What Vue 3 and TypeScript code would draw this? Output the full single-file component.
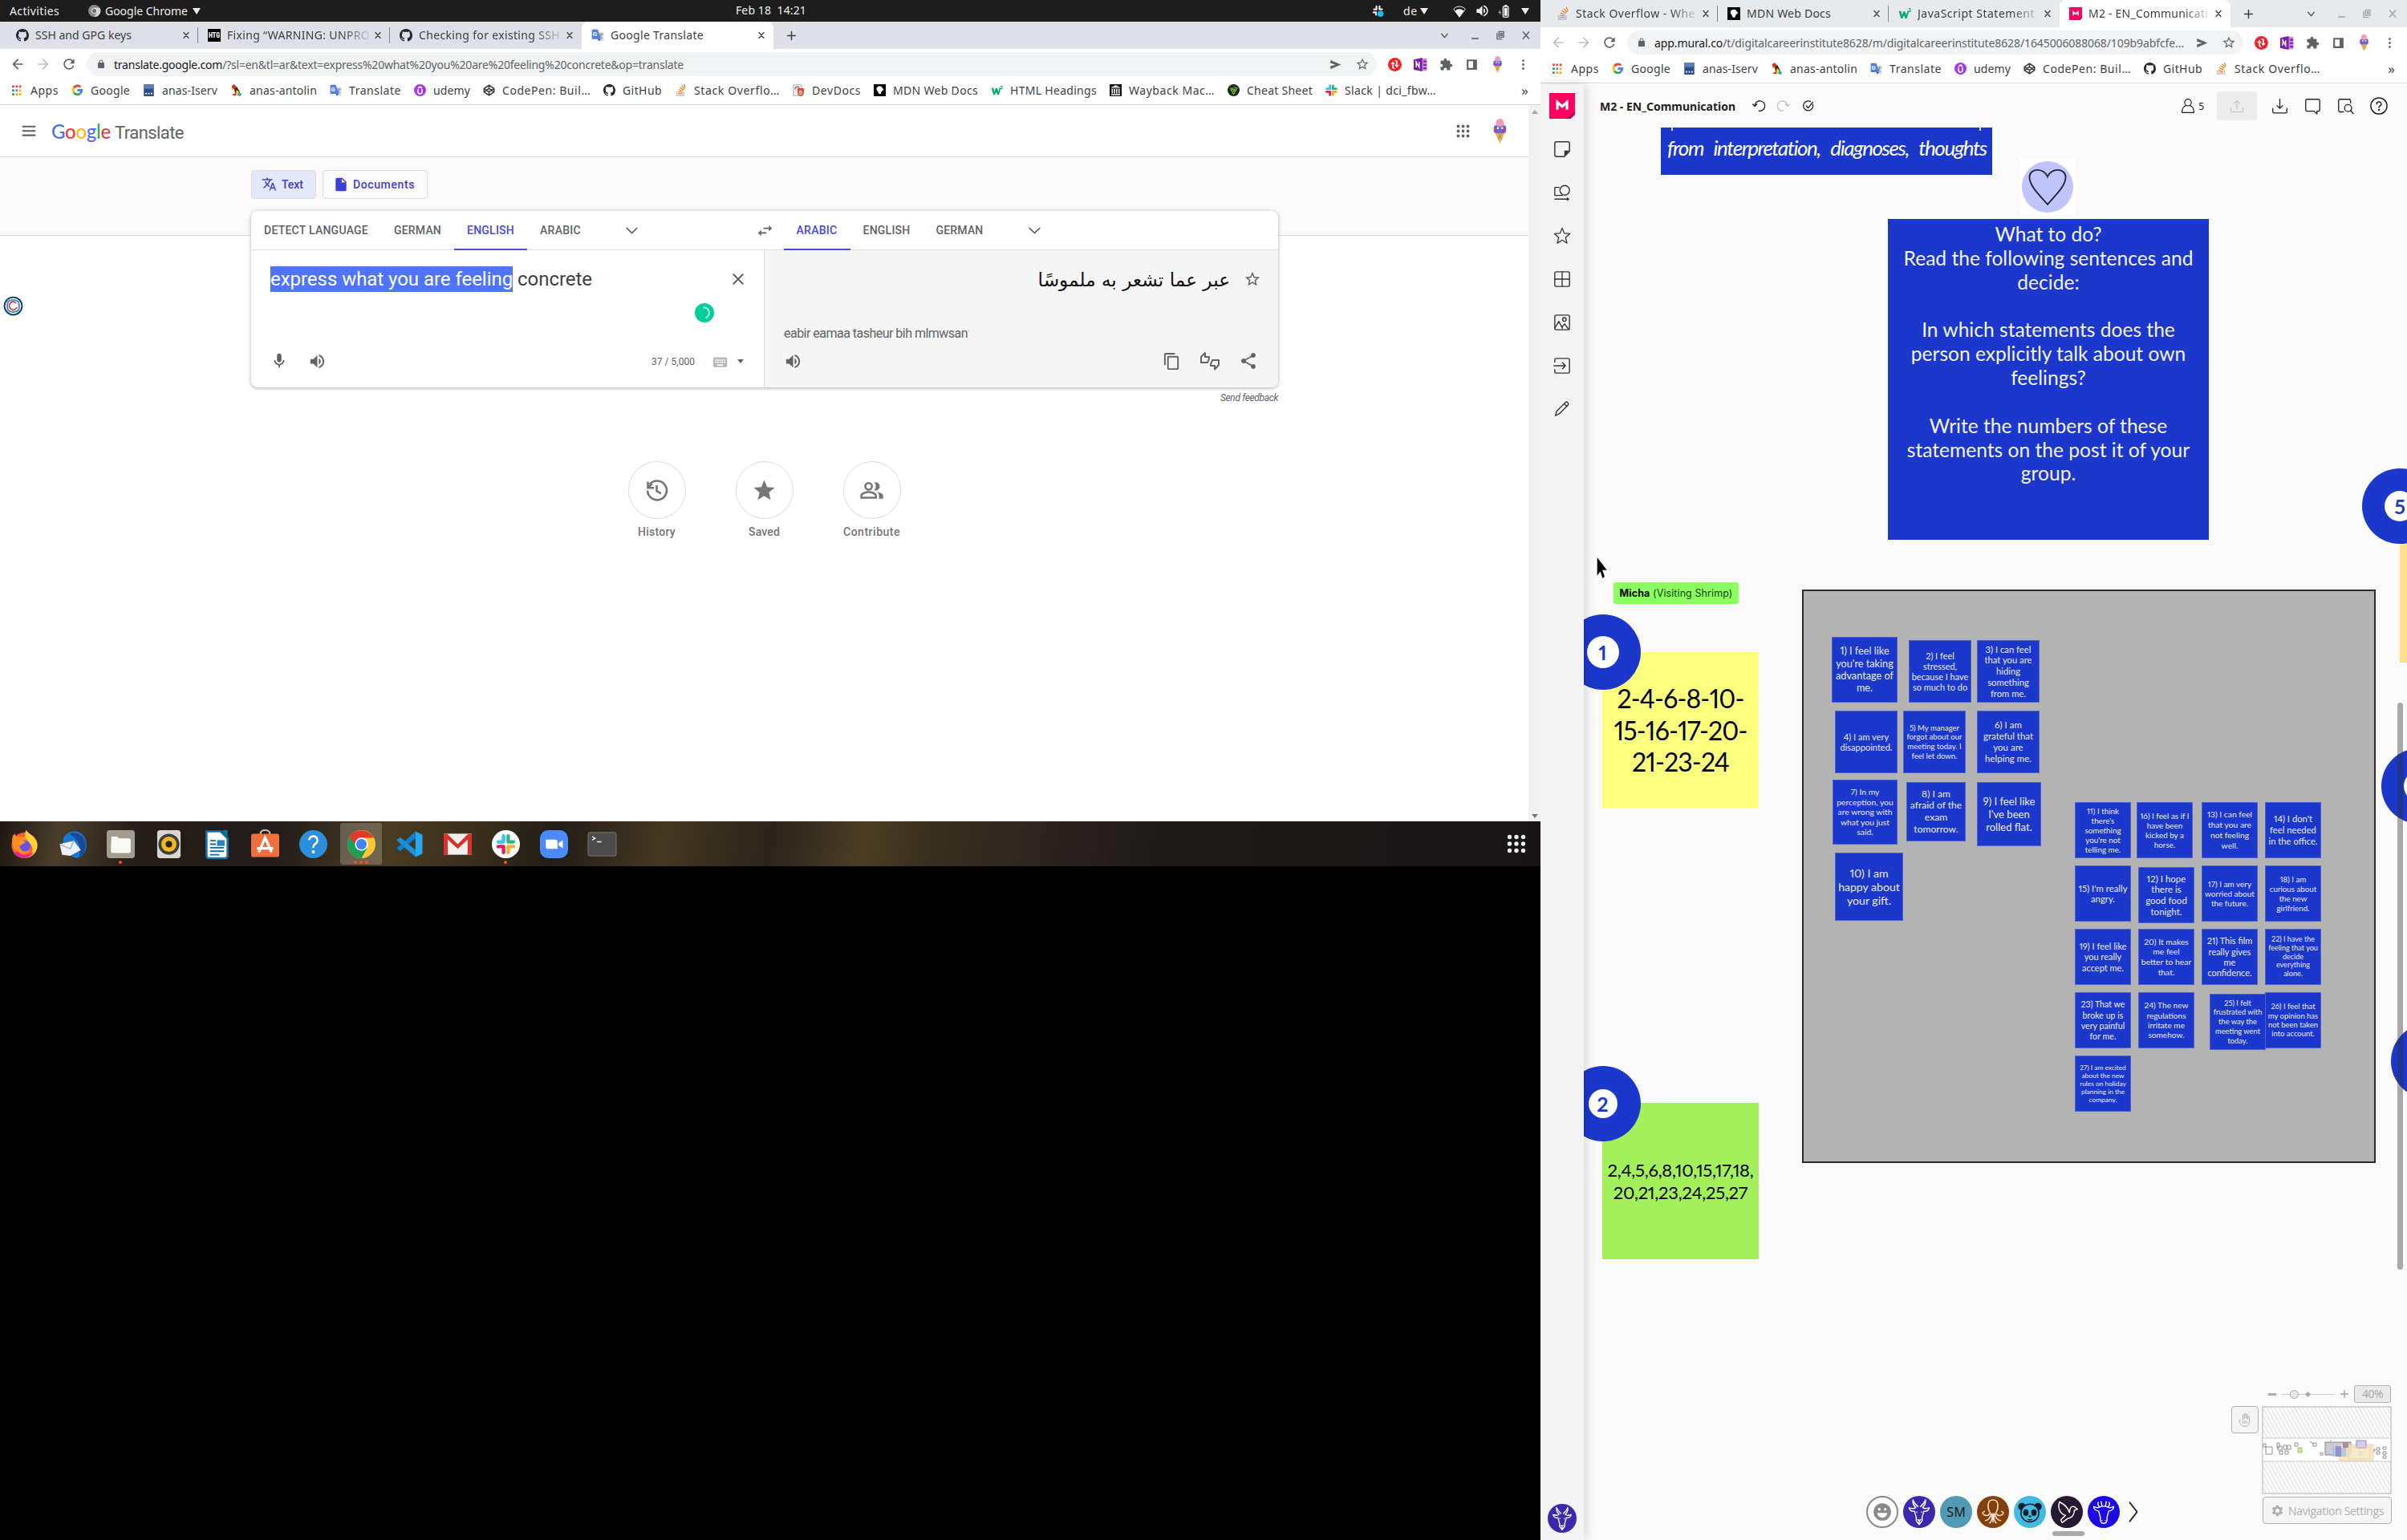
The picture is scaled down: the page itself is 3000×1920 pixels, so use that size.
<script setup lang="ts">
import { h, type FunctionalComponent, type ObjectDirective } from 'vue'

/*
 * Sets a run of text so that it takes up the given width:
 * by tracking, or by font size with the `size` modifier.
 */
const vFit: ObjectDirective<HTMLElement, number> = {
  mounted(el, { value, modifiers }) {
    if (modifiers.size) {
      const size = parseFloat(getComputedStyle(el).fontSize)
      const ratio = value / el.getBoundingClientRect().width
      el.style.fontSize = `${(size * ratio).toFixed(2)}px`
      return
    }
    el.style.letterSpacing = '0px'
    const base = el.getBoundingClientRect().width
    el.style.letterSpacing = '1px'
    const wide = el.getBoundingClientRect().width
    el.style.letterSpacing = `${((value - base) / (wide - base)).toFixed(3)}px`
  },
}

const p = (d: string) => `<path d="${d}" fill="currentColor"/>`
const s = (body: string, w = 1.4) =>
  `<g fill="none" stroke="currentColor" stroke-width="${w}" stroke-linecap="round" stroke-linejoin="round">${body}</g>`

const icons: Record<string, string> = {
  back: p('M20 11H7.83l5.59-5.59L12 4l-8 8 8 8 1.41-1.41L7.83 13H20v-2z'),
  forward: p('M4 11h12.17l-5.59-5.59L12 4l8 8-8 8-1.41-1.41L16.17 13H4v-2z'),
  reload: p('M17.65 6.35A7.958 7.958 0 0 0 12 4c-4.42 0-7.99 3.58-7.99 8s3.57 8 7.99 8c3.73 0 6.84-2.55 7.73-6h-2.08A5.99 5.99 0 0 1 12 18c-3.31 0-6-2.69-6-6s2.69-6 6-6c1.66 0 3.14.69 4.22 1.78L13 11h7V4l-2.35 2.35z'),
  lock: p('M18 8h-1V6c0-2.76-2.24-5-5-5S7 3.24 7 6v2H6c-1.1 0-2 .9-2 2v10c0 1.1.9 2 2 2h12c1.1 0 2-.9 2-2V10c0-1.1-.9-2-2-2zM9 6c0-1.66 1.34-3 3-3s3 1.34 3 3v2H9V6z'),
  send: p('M2 21L23 12 2 3v6l10 3-10 3z'),
  star: p('M22 9.24l-7.19-.62L12 2 9.19 8.63 2 9.24l5.46 4.73L5.82 21 12 17.27 18.18 21l-1.63-7.03L22 9.24zM12 15.4l-3.76 2.27 1-4.28-3.32-2.88 4.38-.38L12 6.1l1.71 4.04 4.38.38-3.32 2.88 1 4.28L12 15.4z'),
  starFull: p('M12 17.27L18.18 21l-1.64-7.03L22 9.24l-7.19-.61L12 2 9.19 8.63 2 9.24l5.46 4.73L5.82 21z'),
  close: p('M19 6.41L17.59 5 12 10.59 6.41 5 5 6.41 10.59 12 5 17.59 6.41 19 12 13.41 17.59 19 19 17.59 13.41 12z'),
  closeBold: s('<path d="M6 5l12 14M18 5L6 19"/>', 2.6),
  plus: s('<path d="M12 3v18M3 12h18"/>', 2.8),
  minus: '<path d="M4 17h16v3H4z" fill="currentColor"/>',
  chev: s('<path d="M5 8l7 8 7-8"/>', 2.8),
  chevThin: s('<path d="M4 8l8 8 8-8"/>', 2),
  restore: s('<path d="M9 4h10v12H9zM12.5 7.500h3v5h-3zM5 8v12h10"/>', 2.4),
  dots: '<g fill="currentColor"><circle cx="12" cy="5" r="2"/><circle cx="12" cy="12" r="2"/><circle cx="12" cy="19" r="2"/></g>',
  puzzle: p('M20.5 11H19V7c0-1.1-.9-2-2-2h-4V3.500a2.500 2.500 0 0 0-5 0V5H4c-1.100 0-1.990.9-1.990 2v3.800H3.500c1.490 0 2.700 1.210 2.700 2.700s-1.210 2.700-2.700 2.700H2V20c0 1.100.9 2 2 2h3.800v-1.500c0-1.490 1.210-2.700 2.700-2.700 1.490 0 2.700 1.210 2.700 2.700V22H17c1.100 0 2-.9 2-2v-4h1.500a2.500 2.500 0 0 0 0-5z'),
  panel: '<path d="M3 3h18v18H3z M6 6v12h8V6z" fill-rule="evenodd" fill="currentColor"/>',
  redo2: '<circle cx="12" cy="12" r="12" fill="#f5222d"/><g fill="none" stroke="#fff" stroke-width="2.600"><path d="M8.500 12v4.500c0 1.800 1.500 2.500 3 1.500M15.500 12V7.500c0-1.800-1.500-2.500-3-1.500"/></g><path d="M4.500 11.500h8l-4-5zM11.500 12.500h8l-4 5z" fill="#fff"/>',
  onenote: '<rect x="10" y="1" width="13" height="22" rx="1" fill="#c78be0"/><path d="M17 5h6v3h-6zM17 11h6v3h-6zM17 17h6v3h-6z" fill="#8e24aa"/><path d="M0 3l15-3v24L0 21z" fill="#7b1fa2"/><path d="M4.500 16.500v-9l5 9v-9" stroke="#fff" stroke-width="2" fill="none"/>',
  cone: '<path d="M6.500 12h11L12 24z" fill="#e5b25c"/><path d="M9 12l5 8M15 12l-5 8" stroke="#c98d35" stroke-width=".8"/><rect x="6" y="6" width="12" height="8" rx="3" fill="#5b6ad8"/><circle cx="12" cy="3.800" r="3.800" fill="#f79ac0"/><path d="M8 4h8v3H8z" fill="#f79ac0"/><circle cx="8" cy="11.500" r="1.500" fill="#f0238c"/><circle cx="16" cy="11.500" r="1.500" fill="#f0238c"/><circle cx="10" cy="9" r="1" fill="#fff"/><circle cx="14" cy="9" r="1" fill="#fff"/>',
  apps: '<g><path d="M2 1h5v5H2zM10 1h5v5h-5zM18 1h5v5h-5z" fill="#ea4335"/><path d="M2 10h5v5H2z" fill="#1e9e55"/><path d="M10 10h5v5h-5z" fill="#4285f4"/><path d="M18 10h5v5h-5zM18 19h5v5h-5zM10 19h5v5h-5z" fill="#fbaf05"/><path d="M2 19h5v5H2z" fill="#1e9e55"/></g>',
  google: '<g fill="none" stroke-width="4.500"><path d="M5 7a8.500 8.500 0 0 1 13-1.500" stroke="#ea4335"/><path d="M5 17a9 9 0 0 1 0-10" stroke="#fbbc05"/><path d="M17.500 18.500A8.600 8.600 0 0 1 5 17" stroke="#34a853"/><path d="M12 12h8.500a8.500 8.500 0 0 1-3 6.500" stroke="#4285f4"/></g>',
  iserv: '<path d="M2 0h20v24H2z" fill="#2c4f8c"/><path d="M2 0h20v9H2z" fill="#5d7fb5"/><path d="M5 17h3v3H5zM10.500 17h3v3h-3zM16 17h3v3h-3z" fill="#fff"/>',
  antolin: '<path d="M7 4l6 1 5 8 2 10-8-2-3-6z" fill="#222"/><path d="M3 3l5-3 4 5-3 5-5-1z" fill="#e53020"/><path d="M2 8l5 1-2 3z" fill="#f6a21a"/><path d="M12 11l5 3-1 8-5-1z" fill="#f4d313"/><path d="M17 15l6 5-3 4-5-2z" fill="#31a5dd"/><path d="M3 21l8-4v6z" fill="#d4291c"/>',
  translate: '<path d="M10 6h13v17H13z" fill="#dcdcdc"/><path d="M1 1h11l6 18H1z" fill="#4f7df0"/><path d="M12 19h6l-4 4z" fill="#4650c8"/><text x="2.500" y="14" font-family="Roboto" font-size="12" font-weight="700" fill="#fff">G</text><path d="M15 10h7M18.500 8.500v2c0 3-2 6-4 7M16 12c1 3 3 5 5 6" stroke="#7b8494" stroke-width="1.500" fill="none"/>',
  udemy: '<circle cx="12" cy="12" r="12" fill="#a435f0"/><path d="M8 10v5a4 4 0 0 0 8 0v-5M8 8l4-3 4 3" stroke="#fff" stroke-width="2.600" fill="none"/>',
  codepen: s('<path d="M12 2l10 6.500v7L12 22 2 15.500v-7zM12 2v6.500M12 15.500V22M2 8.500l10 7 10-7M2 15.500l10-7 10 7"/>', 2.500),
  github: '<path transform="scale(1.500)" fill="#24292e" d="M8 0C3.58 0 0 3.58 0 8c0 3.54 2.29 6.53 5.47 7.59.4.07.55-.17.55-.38 0-.19-.01-.82-.01-1.49-2.01.37-2.53-.49-2.69-.94-.09-.23-.48-.94-.82-1.13-.28-.15-.68-.52-.01-.53.63-.01 1.08.58 1.23.82.72 1.21 1.87.87 2.33.66.07-.52.28-.87.51-1.07-1.78-.2-3.64-.89-3.64-3.95 0-.87.31-1.59.82-2.15-.08-.2-.36-1.02.08-2.12 0 0 .67-.21 2.2.82.64-.18 1.32-.27 2-.27s1.36.09 2 .27c1.53-1.04 2.2-.82 2.2-.82.44 1.1.16 1.92.08 2.12.51.56.82 1.27.82 2.15 0 3.07-1.87 3.75-3.65 3.95.29.25.54.73.54 1.48 0 1.07-.01 1.93-.01 2.2 0 .21.15.46.55.38A8.01 8.01 0 0 0 16 8c0-4.42-3.58-8-8-8z"/>',
  stack: '<path d="M4 15v7.500h14V15" fill="none" stroke="#bcbbbb" stroke-width="2"/><path d="M6.500 19h9M6.500 15.200l9 1M7.500 11l8.500 2.500M10 6.500l7.500 4.500M14 2.500l5.500 7M18.500 0l2.500 8" stroke="#f48024" stroke-width="1.900"/>',
  devdocs: '<rect x="1" y="1" width="17" height="22" rx="2" fill="#e8e8e8" stroke="#999"/><path d="M5 10a4 4 0 1 1 5 3" stroke="#777" stroke-width="2" fill="none"/><path d="M9 8h14l-1.500 13.500L16 24l-5.500-2.500z" fill="#e44d26"/><text x="12.300" y="20" font-family="Roboto" font-size="11" font-weight="700" fill="#fff">5</text>',
  mdn: '<path d="M0 0h24v24H0z" fill="#000"/><path d="M6 7c3-4 9-4 11 0l3 4-4 3-2 5h-4l-2-5c-2-1-3-4-2-7z" fill="#fff"/>',
  w3: '<path d="M1 7h4l2 8 2.500-7h3l2.500 7 2-8h3l-4 14h-3l-2.500-6L8 21H5z" fill="#04aa6d"/><text x="18" y="9" font-family="Roboto" font-size="10" font-weight="700" fill="#04aa6d">3</text>',
  archive: '<path d="M0 0h24v24H0z" fill="#111"/><path d="M12 2l9 4H3zM3 7h18v1.500H3zM4 9.500h2.500v9H4zM8.500 9.500h2.500v9H8.500zM13 9.500h2.500v9H13zM17.500 9.500H20v9h-2.500zM3 19.500h18V22H3z" fill="#fff"/>',
  cheat: '<circle cx="12" cy="12" r="12" fill="#222"/><path d="M5 8h6M13 6l6 2-7 12-5-9 5-1v5l3-6" fill="none" stroke="#6fbf3a" stroke-width="2"/>',
  slack: '<g stroke-width="4.500" stroke-linecap="round"><path d="M9 2.500v7M2.500 9H9" stroke="#36c5f0"/><path d="M15 3v6.500M21.500 9H16" stroke="#2eb67d"/><path d="M15 15v6.500M15 15h6.500" stroke="#ecb22e"/><path d="M9 15v6.500M2.500 15H8" stroke="#e01e5a"/></g>',
  slackMono: '<g stroke-width="3.500" stroke="#e6e6e6" stroke-linecap="round"><path d="M9 3v6M4 9h5M15 3v6M20 9h-4M8 15v5M3 15h4"/></g><circle cx="17" cy="18" r="6" fill="#19c0ee"/>',
  htg: '<path d="M0 0h24v24H0z" fill="#000"/><text x="1.500" y="17" font-family="Roboto" font-size="13" font-weight="900" textLength="21" lengthAdjust="spacingAndGlyphs" fill="#fff">HTG</text>',
  mural: '<path d="M0 0h24v20l-4 4H0z" fill="#ff0061"/><path d="M24 17v3l-4 4h-5z" fill="#c4005a"/><path d="M7.500 15.500v-7l4.500 4.200 4.500-4.200v7" stroke="#fff" stroke-width="2.400" fill="none"/>',
  chromeGrey: '<circle cx="12" cy="12" r="12" fill="#8a8a8a"/><path d="M12 6h11a12 12 0 0 1-11 18l5-9z" fill="#d4d4d4"/><circle cx="12" cy="12" r="5.500" fill="#e8e8e8"/><circle cx="12" cy="12" r="4" fill="#666"/>',
  wifi: '<path d="M12 23L1 8C7 1.500 17 1.500 23 8z" fill="none" stroke="#eee" stroke-width="1.500"/><path d="M12 23L3.500 11.500a12 12 0 0 1 17 0z" fill="#eee"/>',
  vol: p('M3 9v6h4l5 5V4L7 9H3zm13.5 3c0-1.77-1.02-3.29-2.500-4.03v8.05c1.480-.73 2.500-2.250 2.500-4.020zM14 3.230v2.060c2.890.86 5 3.540 5 6.710s-2.110 5.850-5 6.710v2.060c4.010-.91 7-4.490 7-8.770s-2.990-7.860-7-8.770z'),
  battery: '<rect x="11" y="3" width="10" height="20" rx="2" fill="none" stroke="#eee" stroke-width="2"/><path d="M13 5.500h6v15h-6zM14 0h4v3h-4z" fill="#eee"/><path d="M6 8l-4 7h3l-1 5 4-7H5z" fill="#aaa"/>',
  menu: '<path d="M2 4.500h20v2.500H2zM2 11h20v2.500H2zM2 17.500h20V20H2z" fill="currentColor"/>',
  grid9: '<g fill="currentColor">' + [3.5, 12, 20.5].flatMap(x => [3.5, 12, 20.5].map(y => `<circle cx="${x}" cy="${y}" r="2.700"/>`)).join('') + '</g>',
  lang: p('M12.87 15.07l-2.54-2.51.03-.03A17.52 17.52 0 0 0 14.07 6H17V4h-7V2H8v2H1v1.99h11.17C11.5 7.92 10.44 9.75 9 11.35 8.07 10.32 7.3 9.19 6.69 8h-2c.73 1.63 1.73 3.17 2.98 4.56l-5.09 5.02L4 19l5-5 3.11 3.11.76-2.04zM18.5 10h-2L12 22h2l1.12-3h4.75L21 22h2l-4.5-12zm-2.62 7l1.62-4.33L19.12 17h-3.24z'),
  file: p('M6 2c-1.1 0-2 .9-2 2v16a2 2 0 0 0 2 2h12c1.1 0 2-.9 2-2V8l-6-6H6zm7 7V3.5L18.5 9H13z'),
  swap: p('M6.99 11L3 15l3.99 4v-3H14v-2H6.99v-3zM21 9l-3.99-4v3H10v2h7.01v3L21 9z'),
  mic: p('M12 14c1.66 0 3-1.34 3-3V5c0-1.66-1.34-3-3-3S9 3.34 9 5v6c0 1.66 1.34 3 3 3zm5-3c0 2.76-2.24 5-5 5s-5-2.24-5-5H5c0 3.53 2.61 6.43 6 6.92V21h2v-3.08c3.39-.49 6-3.39 6-6.92h-2z'),
  keyboard: p('M20 5H4c-1.1 0-1.99.9-1.99 2L2 17c0 1.1.9 2 2 2h16c1.1 0 2-.9 2-2V7c0-1.1-.9-2-2-2zm-9 3h2v2h-2V8zm0 3h2v2h-2v-2zM8 8h2v2H8V8zm0 3h2v2H8v-2zm-1 2H5v-2h2v2zm0-3H5V8h2v2zm9 7H8v-2h8v2zm0-4h-2v-2h2v2zm0-3h-2V8h2v2zm3 3h-2v-2h2v2zm0-3h-2V8h2v2z'),
  copy: p('M16 1H4c-1.1 0-2 .9-2 2v14h2V3h12V1zm3 4H8c-1.1 0-2 .9-2 2v14c0 1.1.9 2 2 2h11c1.1 0 2-.9 2-2V7c0-1.1-.9-2-2-2zm0 16H8V7h11v14z'),
  thumbs: s('<path d="M1 7v7h8l2-5V7H6V2L1 7zM23 17v-6h-8l-2 5v2h5v4.500z"/>', 2),
  share: p('M18 16.08c-.76 0-1.44.3-1.96.77L8.91 12.7c.05-.23.09-.46.09-.7s-.04-.47-.09-.7l7.05-4.11c.54.5 1.25.81 2.04.81 1.66 0 3-1.34 3-3s-1.34-3-3-3-3 1.34-3 3c0 .24.04.47.09.7L8.04 9.81C7.5 9.31 6.79 9 6 9c-1.66 0-3 1.34-3 3s1.34 3 3 3c.79 0 1.5-.31 2.04-.81l7.12 4.16c-.05.21-.08.43-.08.65 0 1.61 1.31 2.92 2.92 2.92s2.92-1.31 2.92-2.92-1.31-2.92-2.92-2.92z'),
  history: '<g fill="none" stroke="currentColor" stroke-width="2"><path d="M3.200 12a9.200 9.200 0 1 0 2-5.800M3.500 3.500v6h6M12 7v5.500l4.200 2.500"/><path d="M3.500 9.500l4-4"/></g>',
  people: '<g fill="none" stroke="currentColor" stroke-width="2"><circle cx="9" cy="8" r="3.200"/><path d="M2 19v-2c0-2 4-3.500 7-3.500s7 1.500 7 3.500v2z"/></g><path d="M14.500 4.200a4 4 0 1 1 0 7.600 5.500 5.500 0 0 0 0-7.600zM17.500 13.500c3 .5 5.500 1.700 5.500 3.500v3h-4v-3c0-1.400-.6-2.500-1.500-3.500z" fill="currentColor"/>',
  spinner: '<circle cx="12" cy="12" r="12" fill="#00cf9b"/><path d="M10.500 5.500a6.500 6.500 0 0 1 3 12.600" fill="none" stroke="#d6fff2" stroke-width="1.800"/>',
  crest: '<circle cx="12" cy="12" r="10.500" fill="#fff" stroke="#0b3a6b" stroke-width="1.800"/><rect x="5" y="5" width="14" height="14" rx="5" fill="none" stroke="#4285c8" stroke-width="1.800"/><path d="M15.500 8.500a4.800 4.800 0 1 0 1 5" fill="none" stroke="#c0392b" stroke-width="1.500"/>',
  undo: s('<path d="M5 12a7.500 7.500 0 1 1 6 7.400M2 9.500L5 12.500 8 9.500"/>', 1.600),
  redo: s('<path d="M19 12a7.500 7.500 0 1 0-6 7.400M22 9.500L19 12.500 16 9.500"/>', 1.600),
  checked: s('<path d="M20 9a9 9 0 1 1-4-5M8 12l3.500 4L20 5"/>', 2),
  person: s('<circle cx="12" cy="7" r="5"/><path d="M3 22c0-6 3-10 6-10.500M21 22c0-6-3-10-6-10.500M3 22h18"/>', 1.400),
  upload: s('<path d="M12 16V4M8 8l4-4 4 4M3 15v4.500c0 1 .5 1.500 1.500 1.500h15c1 0 1.500-.5 1.500-1.500V15"/>', 1.400),
  download: s('<path d="M12 2v13M8 11l4 4 4-4M2 15v5c0 1 .5 1.500 1.500 1.500h17c1 0 1.500-.5 1.500-1.500v-5"/>', 1.500),
  comment: s('<path d="M4 2h16c1 0 2 1 2 2v13c0 1-1 2-2 2h-2v4l-4-4H4c-1 0-2-1-2-2V4c0-1 1-2 2-2z"/>', 1.500),
  find: s('<path d="M9 20H4c-1 0-2-1-2-2V4c0-1 1-2 2-2h13c1 0 2 1 2 2v3"/><circle cx="15.500" cy="14.500" r="5"/><path d="M19 18l4 4.500"/>', 1.500),
  help: s('<circle cx="12" cy="12" r="11"/><path d="M9 9.500a3 3 0 1 1 4.300 2.700c-1 .5-1.300 1-1.300 2"/>', 1.600) + '<circle cx="12" cy="17.500" r="1.300" fill="currentColor"/>',
  sticky: s('<path d="M4 2h16c1 0 2 1 2 2v11l-7 7H4c-1 0-2-1-2-2V4c0-1 1-2 2-2z"/>', 1.600) + '<path d="M22 14h-7v8z" fill="currentColor"/>',
  shapes: s('<path d="M8 5H2v11h10"/><circle cx="15.500" cy="9" r="6.500"/><path d="M2 21h19M19 19.500l2 1.500-2 1.500"/>', 1.500),
  starThin: s('<path d="M12 1.500l3 7.200 7.500.5-5.800 5 1.900 7.800L12 17.800 5.400 22l1.900-7.800-5.800-5 7.500-.5z"/>', 1.400),
  frame: s('<rect x="2" y="2" width="20" height="20" rx="2"/><path d="M12 2v20M2 12h20"/>', 1.500),
  image: s('<rect x="2" y="2" width="20" height="20" rx="2"/><circle cx="15" cy="8" r="2.500"/><path d="M2.500 19l5-8.500 5 9.500M12 18l3.500-4 5 7"/>', 1.500),
  enter: s('<path d="M2 7V4c0-1 1-2 2-2h16c1 0 2 1 2 2v16c0 1-1 2-2 2H4c-1 0-2-1-2-2v-3M1 12h15M12.500 8l4 4-4 4"/>', 1.500),
  pencil: s('<path d="M3 21l1.500-6L17 2.500c1-1 4 1.500 3.500 3.500L8 18.500zM15 5l3.500 3.500"/>', 1.500),
  hand: s('<path d="M5 13c-2-1.500-3.500 0-2.500 2C4 19 6.500 23 12 23c5 0 7.500-3.500 7.500-8V8.500c0-1.700-2.700-1.700-2.700 0V4.500c0-1.700-2.700-1.700-2.700 0V3c0-1.700-2.700-1.700-2.700 0v1.500c0-1.700-2.700-1.700-2.700 0V13M11.400 4.500V10M14.100 4.500V10M16.800 8v3M9 15v3M12 14v4M15 15v3"/>', 1.300),
  gear: p('M19.14 12.94c.04-.3.06-.61.06-.94 0-.32-.02-.64-.07-.94l2.03-1.58c.18-.14.23-.41.12-.61l-1.92-3.32c-.12-.22-.37-.29-.59-.22l-2.39.96c-.5-.38-1.03-.7-1.62-.94l-.36-2.54c-.04-.24-.24-.41-.48-.41h-3.84c-.24 0-.43.17-.47.41l-.36 2.54c-.59.24-1.13.57-1.62.94l-2.39-.96c-.22-.08-.47 0-.59.22L2.74 8.87c-.12.21-.08.47.12.61l2.03 1.58c-.05.3-.09.63-.09.94s.02.64.07.94l-2.03 1.58c-.18.14-.23.41-.12.61l1.92 3.32c.12.22.37.29.59.22l2.39-.96c.5.38 1.03.7 1.62.94l.36 2.54c.05.24.24.41.48.41h3.84c.24 0 .44-.17.47-.41l.36-2.54c.59-.24 1.13-.56 1.62-.94l2.39.96c.22.08.47 0 .59-.22l1.92-3.32c.12-.22.07-.47-.12-.61l-2.01-1.58zM12 15.6A3.6 3.6 0 1 1 12 8.4a3.6 3.6 0 0 1 0 7.2z'),
  heart: '<path d="M12 23C7 17 1 11.500 1.200 6 1.500.5 10 .5 12 6c2-5.500 10.500-5.500 10.800 0C23 11.500 17 17 12 23z" fill="none" stroke="#23233a" stroke-width=".9"/>',
  cursor: '<path d="M1 0v21l5.500-5 4 8 3.500-2-4-7.500H18z" fill="#000"/>',
  smile: '<circle cx="12" cy="12" r="11.400" fill="#fff" stroke="#8a8a8a" stroke-width="1.200"/><circle cx="12" cy="12" r="6.500" fill="#8a8a8a"/><circle cx="9.800" cy="10" r="1" fill="#fff"/><circle cx="14.200" cy="10" r="1" fill="#fff"/><path d="M8.300 12.700h7.400a3.700 3.700 0 0 1-7.400 0z" fill="#fff"/>',
  goat: '<circle cx="12" cy="12" r="12" fill="#3f27ad"/><g fill="none" stroke="#fff" stroke-width=".85" stroke-linejoin="round"><path d="M9.700 8.700C8 7.500 7 5.500 7.300 3c.8 2.200 2.200 3.800 4 5.200M14.300 8.700c1.700-1.200 2.700-3.200 2.400-5.700-.8 2.200-2.200 3.800-4 5.200M9.700 8.700L7.500 9.500 4.500 9c.2 1.700 1.800 2.800 4 2.500L9.800 16v2.500L12 21.500l2.200-3V16l1.300-4.500c2.200.3 3.800-.8 4-2.500l-3 .5-2.200-.8M10.600 17.500l1.400 1 1.400-1M12 18.500v2"/><path d="M10.200 11.700v.8M13.800 11.700v.8"/></g>',
  initials: '<circle cx="12" cy="12" r="12" fill="#5199b5"/><text x="12" y="15.500" text-anchor="middle" font-family="Open Sans" font-size="9.500" textLength="14" fill="#111">SM</text>',
  octopus: '<circle cx="12" cy="12" r="12" fill="#84400b"/><g fill="none" stroke="#f3ddc8" stroke-width=".9"><path d="M9.500 12c-1.800-3-2-9 2.500-9s4.300 6 2.500 9M10 12c-1 4-5 3-6 .5M14 12c1 4 5 3 6 .5M10.500 13c0 4-3 5.500-4.500 5.500M13.500 13c0 4 3 5.500 4.500 5.500M11.300 13c0 4 0 6-2 7.500M12.700 13c0 4 0 6 2 7.500M4 12.500l2-1M20 12.500l-2-1M12 13v7"/></g>',
  panda: '<circle cx="12" cy="12" r="12" fill="#42bbe3"/><circle cx="6" cy="8" r="2.800" fill="#0d1c28"/><circle cx="18" cy="8" r="2.800" fill="#0d1c28"/><circle cx="12" cy="12.800" r="6.700" fill="#42bbe3" stroke="#0d1c28" stroke-width=".9"/><ellipse cx="9" cy="12.500" rx="2" ry="2.500" fill="#0d1c28"/><ellipse cx="15" cy="12.500" rx="2" ry="2.500" fill="#0d1c28"/><path d="M11 15h2l-1 1.200zM10 17.500c1 .8 3 .8 4 0" stroke="#0d1c28" stroke-width=".6" fill="#0d1c28"/>',
  bird: '<circle cx="12" cy="12" r="12" fill="#251a30"/><path d="M6.500 4.500c4 2 6.500 4.500 7.500 8 0-3.500 1.500-5 3.500-4.500l2.500 2-2.300.8c-.2 4.200-2.200 5.700-5.200 6.200l-4 3-1-2 3.500-3.500C7 13.500 5 9 6.500 4.500z" fill="none" stroke="#fff" stroke-width=".85" stroke-linejoin="round"/>',
  cow: '<circle cx="12" cy="12" r="12" fill="#1d09e6"/><g fill="none" stroke="#fff" stroke-width=".85" stroke-linejoin="round"><path d="M10.800 8L10 4M13.200 8l.8-4M9 8.300C7.700 7.500 7.500 6 8 4.500M15 8.300c1.300-.8 1.500-2.300 1-3.800M9 8.300c1.800-.7 4.200-.7 6 0l1.500.6 3-.9c-.2 2-1.800 3.300-3.700 3.300L14.500 16c.3 3-.5 4.500-2.500 4.500S9.200 19 9.500 16l-1.300-4.700C6.300 11.300 4.700 10 4.500 8l3 .9zM10.800 18.200v.6M13.200 18.200v.6"/></g>',
  next: s('<path d="M7 2l10 10L7 22"/>', 1.800),
  firefox: '<circle cx="12" cy="13" r="11" fill="#ff5a36"/><path d="M13.500 0c1 3 8 5 9.300 11a11 11 0 0 1-8 12.500c5-3 5-9 2-12-4-3-6-7-3.300-11.500z" fill="#ffd43b"/><path d="M1.500 8c0-3 1.500-4.500 2-5l2 3c5-2 9 1 10 4l-4 2-1 4 6 1c-2 5-9 5-12 1C2 15 1.500 12 1.500 8z" fill="#ff8a1f"/><path d="M3 20c4 5 13 5 17-1-5 3-11 3-14-1z" fill="#e3278c"/><circle cx="12.500" cy="13.500" r="4.600" fill="#6a4ff0"/><path d="M6 9c3-1 6 0 7 2-3 0-3 2-5 2z" fill="#ff9a1a"/>',
  thunderbird: '<path d="M4 10C3 3 12-1 18 2c7 4 8 14 2 20l-5 2-8-4c-4-2-5-7-3-10z" fill="#1c78cf"/><path d="M9 3c7-3 15 3 14 10 0 6-3 10-6 11 3-8 1-16-8-21z" fill="#164a9a"/><path d="M1 12l12-3 6 8-9 5-7-1z" fill="#eef1f6"/><path d="M1 12l9 4 3-7" fill="none" stroke="#a9b4c6" stroke-width="1"/>',
  files: '<rect x="0" y="0" width="24" height="24" rx="2.500" fill="#a29d8e"/><path d="M4 5.500h5l1.500 1.500H19a1.500 1.500 0 0 1 1.500 1.500V18A1.500 1.500 0 0 1 19 19.500H5A1.500 1.500 0 0 1 3.500 18z" fill="#f8f8f6"/>',
  rhythm: '<rect x="2" y="0" width="20" height="24" rx="2.500" fill="#dad6cd"/><circle cx="12" cy="12" r="9" fill="#3a3f44"/><circle cx="12" cy="12" r="6.500" fill="#f5b61c"/><circle cx="12" cy="12" r="2.800" fill="#222"/>',
  writer: '<path d="M3 1h12l6 6v15a2 2 0 0 1-2 2H5a2 2 0 0 1-2-2z" fill="#fff" stroke="#1471a8" stroke-width="1.800"/><path d="M16 0h5v6z" fill="#1471a8"/><path d="M6 9h5M6 12h5M6 15h12M6 18h12M6 21h8" stroke="#17689c" stroke-width="1.300"/><rect x="12" y="8.500" width="6.500" height="5" fill="#2b86bd"/>',
  software: '<path d="M8 5V3c0-4 8-4 8 0v2" fill="none" stroke="#d8c19b" stroke-width="1.500"/><rect x="0" y="3" width="24" height="20" rx="2" fill="#ee6f3e"/><path d="M6.500 19L12 6.500 17.500 19M5 15.500h14" fill="none" stroke="#fff" stroke-width="2.200"/>',
  ask: '<circle cx="12" cy="12" r="12" fill="#2b8fd9"/><path d="M8.500 8.500a3.500 3.500 0 1 1 5.500 3c-1.500 1-2 1.500-2 3.500" fill="none" stroke="#fff" stroke-width="1.700"/><circle cx="12" cy="18.500" r="1.300" fill="#fff"/>',
  chrome: '<circle cx="12" cy="12" r="12" fill="#fcc934"/><path d="M12 12L1.600 6A12 12 0 0 0 12 24l5-9z" fill="#1e9e55"/><path d="M1.600 6A12 12 0 0 1 22.400 6.500H12l-5.500 5z" fill="#e0392e"/><circle cx="12" cy="12" r="5.600" fill="#fff"/><circle cx="12" cy="12" r="4.500" fill="#4285f4"/>',
  vscode: '<path d="M17 1l6 3v16l-6 3z" fill="#29a8f2"/><path d="M17 1v6L4 18l-3-2.500z" fill="#0e7fc9"/><path d="M17 23v-6L4 6 1 8.500z" fill="#1a90dd"/>',
  gmail: '<rect x="0" y="3" width="24" height="18" fill="#f4f0ee"/><path d="M0 3h3l9 9 9-9h3v18h-3.500V8L12 16 3.500 8v13H0z" fill="#d9302c"/>',
  slackApp: '<circle cx="12" cy="12" r="12" fill="#fff"/><g stroke-width="3" stroke-linecap="round"><path d="M10 5v5M5.500 10H10" stroke="#36c5f0"/><path d="M14 5v5M18.500 10H14" stroke="#2eb67d"/><path d="M14 14v5M14 14h4.500" stroke="#ecb22e"/><path d="M10 14v5M5.500 14H10" stroke="#e01e5a"/></g>',
  zoom: '<rect width="24" height="24" rx="7" fill="#4a8cff"/><path d="M5 8h8a2 2 0 0 1 2 2v6H7a2 2 0 0 1-2-2zM16 11l3.500-2.500v7L16 13z" fill="#fff"/>',
  terminal: '<rect y="2" width="24" height="20" rx="2" fill="#4b4b4b" stroke="#6a6a6a" stroke-width=".8"/><path d="M3.500 5.500l2.500 1.500-2.500 1.500M7.500 10h4" fill="none" stroke="#eee" stroke-width="1"/>',
}

const Icon: FunctionalComponent<{ name: string; size?: number; stretch?: number }> = props =>
  h('svg', {
    viewBox: '0 0 24 24',
    width: props.size ?? 16,
    height: props.stretch ?? props.size ?? 16,
    preserveAspectRatio: 'none',
    style: { display: 'block', flex: 'none', overflow: 'visible' },
    innerHTML: icons[props.name],
  })
Icon.props = ['name', 'size', 'stretch']

interface Item { icon: string; text: string; w: number }
interface Win { key: string; tabs: Item[]; active: number; host: string; path: string; urlWidth: number; marks: Item[] }

const marks: Item[] = [
  { icon: 'apps', text: 'Apps', w: 35 },
  { icon: 'google', text: 'Google', w: 49 },
  { icon: 'iserv', text: 'anas-Iserv', w: 69 },
  { icon: 'antolin', text: 'anas-antolin', w: 84 },
  { icon: 'translate', text: 'Translate', w: 65 },
  { icon: 'udemy', text: 'udemy', w: 46 },
  { icon: 'codepen', text: 'CodePen: Buil…', w: 110 },
  { icon: 'github', text: 'GitHub', w: 49 },
  { icon: 'stack', text: 'Stack Overflo…', w: 107 },
]
const moreMarks: Item[] = [
  { icon: 'devdocs', text: 'DevDocs', w: 61 },
  { icon: 'mdn', text: 'MDN Web Docs', w: 106 },
  { icon: 'w3', text: 'HTML Headings', w: 108 },
  { icon: 'archive', text: 'Wayback Mac…', w: 107 },
  { icon: 'cheat', text: 'Cheat Sheet', w: 82 },
  { icon: 'slack', text: 'Slack | dci_fbw…', w: 114 },
]
const wins: Win[] = [
  {
    key: 'left', active: 3, host: 'translate.google.com', urlWidth: 710,
    path: '/?sl=en&tl=ar&text=express%20what%20you%20are%20feeling%20concrete&op=translate',
    tabs: [
      { icon: 'github', text: 'SSH and GPG keys', w: 120 },
      { icon: 'htg', text: 'Fixing “WARNING: UNPRO', w: 178 },
      { icon: 'github', text: 'Checking for existing SSH', w: 176 },
      { icon: 'translate', text: 'Google Translate', w: 116 },
    ],
    marks: [...marks, ...moreMarks],
  },
  {
    key: 'right', active: 3, host: 'app.mural.co', urlWidth: 660,
    path: '/t/digitalcareerinstitute8628/m/digitalcareerinstitute8628/1645006088068/109b9abfcfe…',
    tabs: [
      { icon: 'stack', text: 'Stack Overflow - Whe', w: 149 },
      { icon: 'mdn', text: 'MDN Web Docs', w: 105 },
      { icon: 'w3', text: 'JavaScript Statement', w: 146 },
      { icon: 'mural', text: 'M2 - EN_Communicati', w: 149 },
    ],
    marks,
  },
]
const extensions = ['redo2', 'onenote', 'puzzle', 'panel', 'cone', 'dots']
const dock = [
  { icon: 'firefox', dots: 0 }, { icon: 'thunderbird', dots: 0 }, { icon: 'files', dots: 1 },
  { icon: 'rhythm', dots: 0 }, { icon: 'writer', dots: 0 }, { icon: 'software', dots: 0 },
  { icon: 'ask', dots: 0 }, { icon: 'chrome', dots: 3 }, { icon: 'vscode', dots: 0 },
  { icon: 'gmail', dots: 0 }, { icon: 'slackApp', dots: 1 }, { icon: 'zoom', dots: 0 },
  { icon: 'terminal', dots: 0 },
]
const srcLangs = [
  { text: 'DETECT LANGUAGE', w: 130 }, { text: 'GERMAN', w: 59 },
  { text: 'ENGLISH', w: 59, on: true }, { text: 'ARABIC', w: 51 },
]
const dstLangs = [
  { text: 'ARABIC', w: 51, on: true }, { text: 'ENGLISH', w: 59 }, { text: 'GERMAN', w: 59 },
]
const shortcuts = [
  { icon: 'history', text: 'History', w: 47 },
  { icon: 'starFull', text: 'Saved', w: 39 },
  { icon: 'people', text: 'Contribute', w: 71 },
]
const tools = ['sticky', 'shapes', 'starThin', 'frame', 'image', 'enter', 'pencil']
const people = ['smile', 'goat', 'initials', 'octopus', 'panda', 'bird', 'cow']

/* Canvas items: x, y, size, line pitch, width of the longest line, text. */
type Note = [number, number, number, number, number, string]
const notes: Note[] = [
  [309, 635, 82, 15.3, 72, '1) I feel like\nyou\'re taking\nadvantage of\nme.'],
  [405, 639, 78, 13, 70.5, '2) I feel\nstressed,\nbecause I have\nso much to do'],
  [490, 639, 78, 13.8, 59, '3) I can feel\nthat you are\nhiding\nsomething\nfrom me.'],
  [313, 727, 78, 13, 65, '4) I am very\ndisappointed.'],
  [398, 727, 78, 11.7, 69, '5) My manager\nforgot about our\nmeeting today. I\nfeel let down.'],
  [490, 727, 78, 14, 62, '6) I am\ngrateful that\nyou are\nhelping me.'],
  [310, 813, 81, 12.5, 70.5, '7) In my\nperception, you\nare wrong with\nwhat you just\nsaid.'],
  [402, 816, 74, 14.7, 64.5, '8) I am\nafraid of the\nexam\ntomorrow.'],
  [490, 816, 80, 16, 65, '9) I feel like\nI\'ve been\nrolled flat.'],
  [313, 904, 85, 17, 76.7, '10) I am\nhappy about\nyour gift.'],
  [612, 841, 70, 12, 45, '11) I think\nthere\'s\nsomething\nyou\'re not\ntelling me.'],
  [689, 841, 70, 12, 61.3, '16) I feel as if I\nhave been\nkicked by a\nhorse.'],
  [770, 841, 70, 12.8, 56, '13) I can feel\nthat you are\nnot feeling\nwell.'],
  [849, 841, 70, 14, 61, '14) I don\'t\nfeel needed\nin the office.'],
  [612, 920, 70, 13, 61, '15) I\'m really\nangry.'],
  [691, 922, 70, 13.7, 51.7, '12) I hope\nthere is\ngood food\ntonight.'],
  [770, 920, 70, 12, 61.7, '17) I am very\nworried about\nthe future.'],
  [849, 920, 70, 12, 58.3, '18) I am\ncurious about\nthe new\ngirlfriend.'],
  [612, 999, 70, 13.5, 59, '19) I feel like\nyou really\naccept me.'],
  [691, 999, 70, 12.7, 62.3, '20) It makes\nme feel\nbetter to hear\nthat.'],
  [770, 999, 70, 13.3, 56.5, '21) This film\nreally gives\nme\nconfidence.'],
  [849, 999, 70, 10.8, 61.7, '22) I have the\nfeeling that you\ndecide\neverything\nalone.'],
  [612, 1078, 70, 13.3, 55, '23) That we\nbroke up is\nvery painful\nfor me.'],
  [691, 1078, 70, 12.3, 55, '24) The new\nregulations\nirritate me\nsomehow.'],
  [780, 1080, 70, 11.8, 60.7, '25) I felt\nfrustrated with\nthe way the\nmeeting went\ntoday.'],
  [849, 1078, 70, 11.3, 62.3, '26) I feel that\nmy opinion has\nnot been taken\ninto account.'],
  [612, 1157, 70, 10, 57.7, '27) I am excited\nabout the new\nrules on holiday\nplanning in the\ncompany.'],
]
const noteStyle = (n: Note) => ({
  left: `${n[0]}px`, top: `${n[1]}px`, width: `${n[2]}px`, height: `${n[2]}px`,
  lineHeight: `${n[3]}px`, fontSize: `${(n[3] * 0.79).toFixed(2)}px`,
})
const badges = [
  { x: 23.5, y: 653.5, r: 20, text: '1' },
  { x: 23.5, y: 1216.5, r: 18, text: '2' },
  { x: 1017, y: 472, r: 19, text: '5' },
  { x: 1041, y: 821, r: 19, text: '' },
  { x: 1053, y: 1164, r: 19, text: '' },
]
const sticky = [
  { cls: 'yellow', w: 166, text: '2-4-6-8-10-\n15-16-17-20-\n21-23-24' },
  { cls: 'green', w: 182, text: '2,4,5,6,8,10,15,17,18,\n20,21,23,24,25,27' },
]
const task = 'What to do?\nRead the following sentences and\ndecide:\n\nIn which statements does the\nperson explicitly talk about own\nfeelings?\n\nWrite the numbers of these\nstatements on the post it of your\ngroup.'
</script>

<template>
  <div class="desktop">
    <header class="topbar">
      <span v-fit="62" class="t activities">Activities</span>
      <Icon name="chromeGrey" :size="15" />
      <span v-fit="103" class="t appname">Google Chrome</span>
      <i class="tri" />
      <span v-fit="88" class="t clock">Feb 18&nbsp; 14:21</span>
      <Icon name="slackMono" :size="15" />
      <span v-fit="18" class="t lang">de</span>
      <i class="tri" />
      <Icon name="wifi" :size="16" class="wifi" />
      <Icon name="vol" :size="19" class="vol" />
      <Icon name="battery" :size="16" class="bat" />
      <i class="tri last" />
    </header>

    <section v-for="win in wins" :key="win.key" class="win" :class="win.key">
      <div class="tabs">
        <div v-for="(tab, i) in win.tabs" :key="tab.text" class="tab" :class="{ on: i === win.active, sep: i < 2 }">
          <Icon :name="tab.icon" :size="16" />
          <div class="title" :class="{ fade: tab.w > 140 }"><span v-fit="tab.w" class="t">{{ tab.text }}</span></div>
          <Icon name="closeBold" :size="12" class="x" />
        </div>
        <Icon name="plus" :size="13" class="add" />
        <span class="grow" />
        <div class="ctl"><Icon name="chev" :size="13" /></div>
        <div class="ctl wide dim"><Icon name="minus" :size="13" /></div>
        <div class="ctl dim"><Icon name="restore" :size="14" /></div>
        <div class="ctl dim"><Icon name="closeBold" :size="14" /></div>
      </div>
      <div class="toolbar">
        <div class="btn nav"><Icon name="back" :size="20" /></div>
        <div class="btn off"><Icon name="forward" :size="20" /></div>
        <div class="btn"><Icon name="reload" :size="20" /></div>
        <div class="pill">
          <Icon name="lock" :size="12" />
          <span v-fit="win.urlWidth" class="t url"><b>{{ win.host }}</b>{{ win.path }}</span>
          <span class="grow" />
          <Icon name="send" :size="15" />
          <Icon name="star" :size="18" class="fav" />
        </div>
        <div v-for="e in extensions" :key="e" class="btn"><Icon :name="e" :size="e === 'cone' ? 21 : 17" /></div>
      </div>
      <div class="marks">
        <div v-for="m in win.marks" :key="m.text" class="mark">
          <Icon :name="m.icon" :size="m.icon === 'apps' ? 13 : 15" />
          <span v-fit="m.w" class="t">{{ m.text }}</span>
        </div>
        <span class="grow" />
        <span class="t more">»</span>
      </div>

      <main v-if="win.key === 'left'" class="page">
        <div class="content">
          <header class="ghead">
            <Icon name="menu" :size="20" />
            <div class="logo">
              <span v-fit="74" class="t g"><i class="b">G</i><i class="r">o</i><i class="y">o</i><i class="b">g</i><i class="gr">l</i><i class="r">e</i></span>
              <span v-fit="86" class="t tr">Translate</span>
            </div>
            <span class="grow" />
            <Icon name="grid9" :size="17" />
            <Icon name="cone" :size="31" class="me" />
          </header>
          <div class="band">
            <button class="mode on"><Icon name="lang" :size="19" /><span v-fit="27" class="t">Text</span></button>
            <button class="mode doc"><Icon name="file" :size="20" /><span v-fit="77" class="t">Documents</span></button>
          </div>
          <div class="card">
            <div class="langs">
              <div class="half src">
                <div v-for="l in srcLangs" :key="l.text" class="lang-tab" :class="{ on: l.on }"><span v-fit="l.w" class="t">{{ l.text }}</span></div>
                <Icon name="chevThin" :size="19" class="drop" />
              </div>
              <Icon name="swap" :size="23" class="swap" />
              <div class="half dst">
                <div v-for="l in dstLangs" :key="l.text" class="lang-tab" :class="{ on: l.on }"><span v-fit="l.w" class="t">{{ l.text }}</span></div>
                <Icon name="chevThin" :size="19" class="drop" />
              </div>
            </div>
            <div class="panes">
              <div class="pane input">
                <div class="row">
                  <span v-fit="401" class="t big"><mark>express what you are feeling</mark> concrete</span>
                  <span class="grow" />
                  <Icon name="close" :size="24" />
                </div>
                <div class="row spin"><Icon name="spinner" :size="24" /></div>
                <div class="row foot">
                  <Icon name="mic" :size="22" /><Icon name="vol" :size="23" class="spk" />
                  <span class="grow" />
                  <span v-fit="54" class="t count">37 / 5,000</span>
                  <Icon name="keyboard" :size="21" class="kb" />
                  <i class="tri" />
                </div>
              </div>
              <div class="pane output">
                <div class="row">
                  <span class="grow" />
                  <span class="ar" dir="rtl" lang="ar">عبر عما تشعر به ملموسًا</span>
                  <Icon name="star" :size="22" />
                </div>
                <div class="row roman"><span v-fit="229" class="t">eabir eamaa tasheur bih mlmwsan</span></div>
                <div class="row foot">
                  <Icon name="vol" :size="23" />
                  <span class="grow" />
                  <Icon name="copy" :size="23" /><Icon name="thumbs" :size="24" /><Icon name="share" :size="24" />
                </div>
              </div>
            </div>
          </div>
          <div class="feedback"><span v-fit="72" class="t">Send feedback</span></div>
          <div class="shortcuts">
            <div v-for="c in shortcuts" :key="c.text" class="shortcut">
              <div class="ring"><Icon :name="c.icon" :size="31" /></div>
              <span v-fit="c.w" class="t">{{ c.text }}</span>
            </div>
          </div>
          <Icon name="crest" :size="25" class="crest" />
        </div>
        <div class="scroll"><i class="up" /><i class="down" /></div>
      </main>

      <main v-else class="mural">
        <aside class="side">
          <Icon name="mural" :size="32" class="brand" />
          <div v-for="tl in tools" :key="tl" class="tool"><Icon :name="tl" :size="22" /></div>
          <span class="grow" />
          <Icon name="goat" :size="36" class="self" />
        </aside>
        <div class="work">
          <header class="mhead">
            <span v-fit="169" class="t name">M2 - EN_Communication</span>
            <Icon name="undo" :size="20" class="undo" />
            <Icon name="redo" :size="20" class="redo" />
            <Icon name="checked" :size="16" />
            <span class="grow" />
            <Icon name="person" :size="20" /><span class="t five">5</span>
            <div class="share"><Icon name="upload" :size="20" /></div>
            <Icon name="download" :size="21" class="h" />
            <Icon name="comment" :size="21" class="h" />
            <Icon name="find" :size="21" class="h" />
            <Icon name="help" :size="22" class="h" />
          </header>
          <div class="canvas">
            <div class="strip">
              <span v-fit="397" class="t hand">from interpretation, diagnoses, thoughts</span>
            </div>
            <div class="love"><div class="disc"><Icon name="heart" :size="50" :stretch="49" /></div></div>
            <div class="task"><span v-fit.size="361" class="t">{{ task }}</span></div>
            <div class="tape" />
            <div class="board" />
            <div v-for="n in notes" :key="n[5]" class="note" :style="noteStyle(n)"><span v-fit.size="n[4]" class="t">{{ n[5] }}</span></div>
            <div v-for="k in sticky" :key="k.cls" class="sticky" :class="k.cls"><span v-fit="k.w" class="t">{{ k.text }}</span></div>
            <div v-for="b in badges" :key="b.x + b.y" class="badge" :style="{ left: `${b.x - 47}px`, top: `${b.y - 47}px` }">
              <div class="hole" :style="{ width: `${b.r * 2}px`, height: `${b.r * 2}px` }">{{ b.text }}</div>
            </div>
            <div class="thumb" />
            <Icon name="cursor" :size="17" :stretch="26" class="cursor" />
            <div class="who"><span v-fit="141" class="t"><b>Micha</b> (Visiting Shrimp)</span></div>
            <div class="crowd">
              <Icon v-for="a in people" :key="a" :name="a" :size="40" />
              <Icon name="next" :size="22" :stretch="28" class="next" />
            </div>
            <div class="under" />
            <div class="zoomrow">
              <i class="dash" /><div class="track"><i class="knob" /><i class="dia" /></div>
              <Icon name="plus" :size="12" /><div class="pct"><span v-fit="26" class="t">40%</span></div>
            </div>
            <div class="palm"><Icon name="hand" :size="18" /></div>
            <svg class="map" width="162" height="110" viewBox="0 0 162 110">
              <defs><pattern id="hatch" width="5" height="9" patternUnits="userSpaceOnUse"><path d="M0 0l5 9" stroke="#ddd" stroke-width=".9" /></pattern></defs>
              <rect x="1" y="1" width="160" height="108" fill="url(#hatch)" stroke="#c9c9c9" stroke-width="1.5" />
              <rect x="1" y="40" width="160" height="29" fill="#fff" stroke="#c9c9c9" />
              <g fill="none" stroke="#8f8f8f">
                <path d="M2 47h3v4H2zM5 51h8v9H5zM19 46h3v6h-3zM20 50h5v5h-5zM27 49h4v5h-4zM32 49h4v5h-4zM22 56h4v4h-4zM29 56h4v4h-4zM41 46h4v4h-4zM60 44l4 3M64 46h4v4h-4zM73 58h3v3h-3zM143 52h4v3h-4zM151 51h4v3h-4zM143 57h4v3h-4zM151 57h4v3h-4zM151 62h4v3h-4zM138 54h3v2h-3zM86 44v-2" />
                <path d="M122 56l4 5h-5z" />
              </g>
              <rect x="45" y="52" width="5" height="6" fill="#c9e88c" stroke="#aabf7a" />
              <rect x="79" y="45" width="32" height="16" fill="#cdc9d0" stroke="#8d8a92" />
              <rect x="97" y="48" width="42" height="20" fill="#f6e6c4" stroke="#e5cf9c" opacity=".85" />
              <rect x="88" y="52" width="17" height="11" fill="#a5c3dd" opacity=".8" />
              <rect x="92" y="50" width="7" height="13" fill="#8d7fd0" opacity=".8" />
              <rect x="101" y="45" width="7" height="7" fill="#a58ea6" />
              <rect x="118" y="43" width="12" height="9" fill="#d3c9ef" stroke="#9c8bd8" />
              <path d="M108 51h27v15h-27z" fill="none" stroke="#f6d59c" />
            </svg>
            <div class="navset"><Icon name="gear" :size="17" /><span v-fit="119" class="t">Navigation Settings</span></div>
          </div>
        </div>
      </main>
    </section>

    <footer class="dock">
      <div v-for="d in dock" :key="d.icon" class="app" :class="{ on: d.dots === 3 }">
        <Icon :name="d.icon" :size="35" />
        <div class="runs"><i v-for="k in d.dots" :key="k" /></div>
      </div>
      <span class="grow" />
      <Icon name="grid9" :size="24" class="all" />
    </footer>
  </div>
</template>

<style>
body { margin: 0; background: #000; }
</style>

<style scoped>
.desktop { width: 3000px; height: 1920px; position: relative; overflow: hidden; background: #000; display: grid; grid-template-columns: 1920px 1080px; grid-template-rows: 27px 997px 56px 840px; font-family: 'Noto Sans', 'Open Sans', sans-serif; }
.t { display: inline-block; white-space: pre; }
.grow { flex: 1; }
.tri { width: 0; height: 0; border: 5px solid transparent; border-top: 8px solid currentColor; border-bottom: 0; }
.topbar { grid-column: 1; grid-row: 1; background: #1d1d1d; color: #eee; display: flex; align-items: center; font-size: 14px; line-height: 18px; }
.activities { margin: 0 36px 0 12px; }
.appname { margin: 0 6px 0 6px; }
.clock { margin-left: 667px; margin-right: 705px; margin-top: -1px; }
.lang { margin: 0 3px 0 24px; }
.topbar .wifi { margin-left: 31px; }
.topbar .vol { margin-left: 11px; }
.topbar .bat { margin-left: 9px; }
.last { margin-left: 14px; }

.win { display: flex; flex-direction: column; overflow: hidden; background: #fff; color: #3c4043; font-size: 14px; }
.win.left { grid-column: 1; grid-row: 2; }
.win.right { grid-column: 2; grid-row: 1 / 5; }
.tabs { height: 34px; flex: none; background: #dee0e5; display: flex; align-items: center; padding-left: 8px; color: #3c4043; }
.right .tabs { background: #e7eaed; }
.tab { width: 239px; height: 34px; box-sizing: border-box; padding: 0 9px 1px 12px; display: flex; align-items: center; position: relative; }
.right .tab { width: 213px; }
.tab.sep::after { content: ''; position: absolute; right: 0; top: 7px; width: 1px; height: 20px; background: #808489; }
.tab.on { background: #fff; border-radius: 8px 8px 0 0; }
.title { flex: 1; min-width: 0; margin: 0 0 0 8px; }
.title.fade { mask-image: linear-gradient(90deg, #000 calc(100% - 38px), transparent); }
.add { margin-left: 16px; }
.ctl { width: 32px; display: flex; justify-content: center; color: #5f6368; }
.ctl:nth-last-child(1) { margin-right: 2px; }
.ctl.wide { margin-left: 6px; }
.right .dim { opacity: .5; }
.toolbar { height: 38px; flex: none; display: flex; align-items: center; padding: 0 6px; color: #5f6368; }
.btn { width: 32px; display: flex; justify-content: center; }
.btn.off, .right .btn.nav { color: #bdc0c4; }
.pill { flex: 1; height: 30px; margin: 0 6px; border-radius: 15px; background: #f1f3f4; display: flex; align-items: center; padding: 0 9px 0 12px; }
.url { margin-left: 10px; color: #5f6368; }
.url b { font-weight: 400; color: #17181a; }
.fav { margin-left: 17px; }
.marks { height: 32px; box-sizing: border-box; flex: none; padding: 0 15px 4px 14px; border-bottom: 1px solid #d6d8da; display: flex; align-items: center; gap: 16px; }
.mark { display: flex; align-items: center; gap: 9px; }
.mark:first-child { gap: 11px; }
.more { font-size: 17px; line-height: 20px; }

.page { flex: 1; display: flex; min-height: 0; font-family: Roboto, sans-serif; }
.content { flex: 1; position: relative; }
.scroll { width: 15px; background: #f1f1f1; display: flex; flex-direction: column; justify-content: space-between; align-items: center; }
.scroll i { border: 4px solid transparent; }
.scroll .up { border-bottom: 5px solid #a3a3a3; margin-top: 2px; }
.scroll .down { border-top: 5px solid #777; margin-bottom: 0; }
.ghead { height: 65px; box-sizing: border-box; border-bottom: 1px solid #dadce0; padding: 0 20px 0 26px; display: flex; align-items: center; color: #5f6368; }
.logo { display: flex; align-items: baseline; gap: 5px; margin-left: 18px; font-size: 22px; }
.logo .g { font-size: 24px; font-family: Lato, sans-serif; font-weight: 500; }
.logo i { font-style: normal; }
.b { color: #4f6ef7; } .r { color: #ea3b35; } .y { color: #fbbc05; } .gr { color: #34a853; }
.me { margin-left: 22px; }
.band { height: 98px; background: #fafafa; box-sizing: border-box; border-bottom: 1px solid #dadce0; padding: 16px 0 0 313px; display: flex; align-items: flex-start; gap: 8px; }
.mode { height: 36px; box-sizing: border-box; border: 1px solid #dadce0; border-radius: 4px; background: #fafafa; color: #3f3fd4; font: 500 14px Roboto, sans-serif; display: flex; align-items: center; padding: 0 15px 1px 12px; gap: 6px; }
.mode.on { background: #e4e9f9; width: 81px; }
.mode.doc { width: 131px; padding-left: 12px; gap: 5px; }
.card { margin: -31px 0 0 313px; width: 1280px; height: 220px; background: #fff; border-radius: 8px; box-shadow: 0 1px 4px rgba(60, 64, 67, .45); overflow: hidden; position: relative; display: flex; flex-direction: column; }
.langs { height: 48px; border-bottom: 1px solid #dadce0; display: flex; align-items: center; color: #5f6368; font-size: 14px; font-weight: 500; }
.half { display: flex; align-items: center; }
.half.src { width: 628.5px; }
.swap { margin-right: 12px; }
.lang-tab { height: 49px; line-height: 48px; padding: 0 16px; box-sizing: border-box; }
.lang-tab.on { color: #4848e8; border-bottom: 2px solid #4848e8; }
.drop { margin-left: 38px; }
.panes { flex: 1; display: flex; }
.pane { flex: 1; box-sizing: border-box; display: flex; flex-direction: column; color: #5f6368; }
.row { display: flex; align-items: center; }
.input { border-right: 1px solid #dadce0; padding: 17px 20px 0 24px; max-width: 640px; }
.input .row:first-child { height: 38px; }
.big { font-size: 24px; line-height: 32px; color: #3c4043; }
mark { background: #4f74ff; color: #fff; display: inline-block; }
.spin { justify-content: flex-end; padding-right: 42px; margin-top: 11px; height: 24px; }
.foot { margin-top: auto; height: 30px; margin-bottom: 18px; }
.spk { margin-left: 25px; }
.count { font-size: 12px; padding-top: 2px; }
.kb { margin: 2px 16px 0 21px; color: #b8b8b8; }
.foot .tri { border-width: 4px; border-top-width: 5px; margin-right: 5px; }
.kb + .tri { margin-left: -5px; }
.output { background: #f5f5f5; padding: 17px 21px 0 24px; }
.output .row:first-child { height: 38px; gap: 17px; }
.ar { font: 23.2px 'DejaVu Sans', sans-serif; color: #111; white-space: nowrap; }
.roman { margin-top: 38px; height: 20px; font-size: 16px; }
.output .foot { padding-right: 4px; }
.output .foot > svg + svg { margin-left: 24px; }
.feedback { width: 1593px; text-align: right; font-size: 12px; font-style: italic; color: #5f6368; margin-top: 6px; height: 18px; }
.shortcuts { display: flex; justify-content: center; gap: 62px; margin-top: 68px; color: #757575; font-size: 14px; font-weight: 500; }
.shortcut { width: 72px; display: flex; flex-direction: column; align-items: center; gap: 8px; }
.ring { width: 72px; height: 72px; box-sizing: border-box; border: 1px solid #dadce0; border-radius: 50%; display: grid; place-items: center; }
.crest { position: absolute; left: 4px; top: 238px; }

.mural { flex: 1; display: flex; min-height: 0; background: #fafafa; margin-top: 1px; }
.side { width: 54px; background: #f3f3f3; display: flex; flex-direction: column; align-items: center; box-shadow: 2px 0 14px rgba(0, 0, 0, .16); z-index: 2; color: #333; }
.brand { margin: 11px 0 11px; }
.tool { height: 54px; width: 54px; display: grid; place-items: center; }
.self { margin-bottom: 9px; }
.work { flex: 1; display: flex; flex-direction: column; min-width: 0; }
.mhead { height: 54px; display: flex; align-items: center; padding: 0 24px 0 20px; color: #222; box-sizing: border-box; }
.name { font-weight: 700; font-size: 14px; }
.undo { margin-left: 20px; }
.redo { margin: 0 14px 0 9px; opacity: .25; }
.five { font-size: 12px; margin-left: 3px; }
.share { width: 50px; height: 36px; border-radius: 4px; background: #ececec; display: grid; place-items: center; color: #c4c4c4; margin: 0 18px 0 16px; }
.h + .h { margin-left: 20px; }
.canvas { flex: 1; position: relative; overflow: hidden; font-family: Lato, 'Open Sans', sans-serif; font-feature-settings: 'pnum' 1, 'lnum' 1; }
.canvas > * { position: absolute; }
.strip { left: 96px; top: 0; width: 413px; height: 59px; background: #1c38cc; color: #fff; overflow: hidden; }
.strip::before, .strip::after { content: ''; position: absolute; top: 0; left: 13px; width: 2px; height: 4px; background: #dfe4ff; }
.strip::after { left: 397px; }
.hand { margin: 6px 0 0 8px; font: italic 400 26px/38px Lato, sans-serif; word-spacing: 8px; }
.love { left: 544px; top: 38px; width: 68px; height: 71px; background: #fff; display: grid; place-items: center; }
.disc { width: 64px; height: 64px; border-radius: 50%; background: #bfc4fd; display: grid; place-items: center; }
.task { left: 379px; top: 114px; width: 400px; height: 400px; box-sizing: border-box; background: #1c38cc; color: #f2f4ff; text-align: center; font-size: 24px; line-height: 29.85px; padding-top: 4px; }
.board { left: 272px; top: 576px; width: 711px; height: 711px; background: #b3b3b3; border: 2px solid #2c2c2c; }
.note { box-sizing: border-box; background: #1c38cc; border: 1px solid #4f62cf; color: #e8ebff; display: flex; align-items: center; justify-content: center; text-align: center; }
.sticky { left: 23px; width: 195px; height: 195px; display: flex; align-items: center; justify-content: center; text-align: center; color: #000; }
.yellow { top: 654px; background: #fcff7e; font-size: 32px; line-height: 39.6px; }
.green { top: 1216px; background: #a3f05c; font-size: 22px; line-height: 27.6px; }
.tape { left: 1017px; top: 472px; width: 20px; height: 195px; background: #fddf87; }
.badge { width: 94px; height: 94px; border-radius: 50%; background: #1c38cc; display: grid; place-items: center; }
.hole { border-radius: 50%; background: #fff; color: #1c38cc; font-size: 25px; font-weight: 700; display: grid; place-items: center; }
.thumb { left: 1014px; top: 717px; width: 7px; height: 707px; border-radius: 4px; background: rgba(48, 48, 48, .4); }
.cursor { left: 16px; top: 536px; }
.who { left: 37px; top: 567px; width: 156px; height: 27px; border-radius: 3px; background: #8bff61; color: #1c3d14; font: 400 12.500px/27px Inter, sans-serif; text-align: center; }
.who b { color: #000; }
.crowd { left: 351.500px; top: 1706px; display: flex; gap: 6.050px; align-items: center; }
.next { margin-left: 0; color: #222; }
.under { left: 584px; top: 1750px; width: 40px; height: 6px; border-radius: 3px; background: #a9a9a9; }
.zoomrow { left: 853px; top: 1568px; display: flex; align-items: center; color: #a5a5a5; height: 22px; }
.dash { width: 10px; height: 3px; background: #aaa; }
.track { width: 66px; height: 1px; background: #ccc; margin: 0 6px 0 7px; display: flex; align-items: center; }
.knob { width: 9px; height: 9px; border: 1px solid #aaa; background: #e8e8e8; border-radius: 50%; margin-left: 10px; flex: none; }
.dia { width: 5px; height: 5px; background: #aaa; transform: rotate(45deg); margin-left: 9px; flex: none; }
.pct { width: 44px; height: 20px; border: 1px solid #b0b0b0; border-radius: 3px; background: #e9e9e9; margin-left: 6px; font: 14px/20px 'Open Sans', sans-serif; text-align: center; }
.palm { left: 807px; top: 1594px; width: 32px; height: 32px; border: 1px solid #b0b0b0; border-radius: 4px; background: #f5f5f5; color: #aaa; display: grid; place-items: center; }
.map { left: 844.500px; top: 1594px; }
.navset { left: 846px; top: 1707px; width: 159px; height: 32px; border: 1px solid #b0b0b0; border-radius: 4px; background: #f5f5f5; color: #b0b0b0; display: flex; align-items: center; justify-content: center; gap: 5px; font: 14px 'Open Sans', sans-serif; }

.dock { grid-column: 1; grid-row: 3; display: flex; align-items: center; background: linear-gradient(100deg, #1c1712 0%, #4b3f2b 4%, #241e1a 9%, #221d1a 18%, #4a3c22 25%, #3a2f1c 31%, #221d17 36%, #453820 43%, #2a241c 50%, #4a3d22 56%, #3a301f 60%, #2a2420 68%, #1e1a19 75%, #181516 100%); }
.app { width: 52px; height: 52px; margin: 0 4px; display: grid; place-items: center; border-radius: 3px; position: relative; }
.app.on { background: rgba(170, 160, 145, .42); }
.runs { position: absolute; bottom: 1px; display: flex; gap: 3px; }
.runs i { width: 4px; height: 4px; border-radius: 50%; background: #f0551f; }
.all { color: #eee; margin-right: 18px; }
</style>
